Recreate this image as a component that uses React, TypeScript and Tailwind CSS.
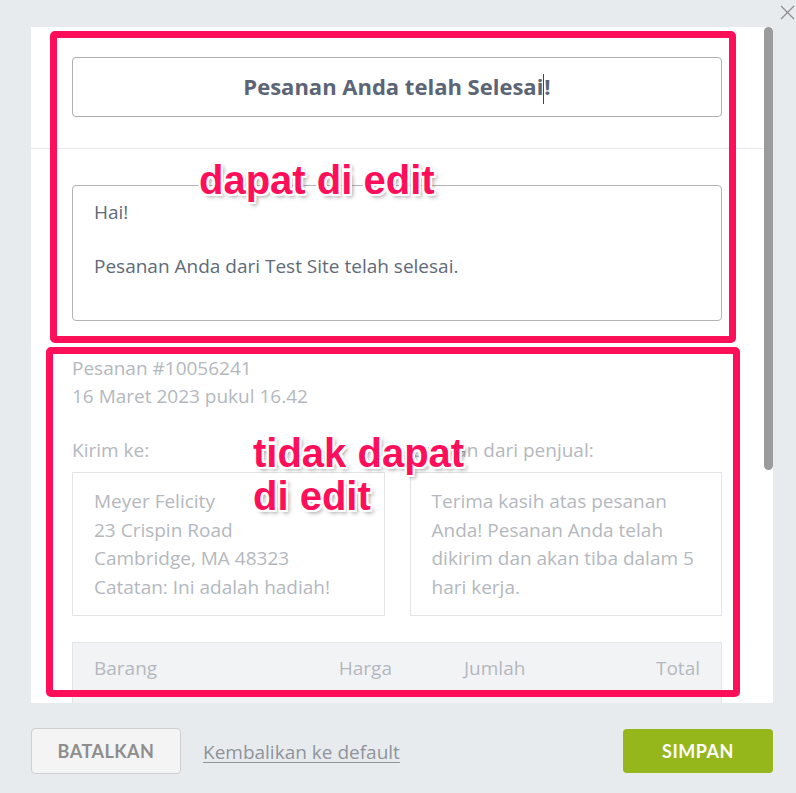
import React from "react";

const outline =
  "[text-shadow:2px_0_0_#fff,-2px_0_0_#fff,0_2px_0_#fff,0_-2px_0_#fff,2px_2px_0_#fff,-2px_-2px_0_#fff,2px_-2px_0_#fff,-2px_2px_0_#fff,3px_3px_4px_rgba(0,0,0,0.4)]";

export default function App() {
  return (
    <div className="relative w-[796px] h-[793px] bg-[#e8ebee] overflow-hidden font-['Open_Sans',sans-serif]">
      {/* close */}
      <svg
        className="absolute left-[779px] top-[4px]"
        width="17"
        height="17"
        viewBox="0 0 17 17"
      >
        <path d="M2 2 L15 15 M15 2 L2 15" stroke="#8c8f93" strokeWidth="1.3" fill="none" />
      </svg>

      <div className="flex flex-col pt-[27px] pl-[31px] pr-[23px]">
        {/* scrolling area */}
        <div className="h-[676px] bg-white flex overflow-hidden">
          <div className="w-[732px] shrink-0">
            <div className="px-[41px] pt-[30px] pb-[31px] border-b border-[#e6e8eb]">
              <div className="h-[60px] border border-[#b0b0b0] rounded-[4px] flex items-center justify-center text-[22px] font-bold text-[#5b6576]">
                <span>
                  Pesanan Anda telah Selesai
                  <span className="inline-block w-px h-[30px] bg-[#444] align-middle -mt-[2px]"></span>
                  !
                </span>
              </div>
            </div>
            <div className="px-[41px] pt-[36px]">
              <div className="h-[136px] border border-[#b3b3b3] rounded-[4px] pl-[21px] pt-[13px] text-[19px] leading-[27px] text-[#606a78]">
                <div>Hai!</div>
                <div>&nbsp;</div>
                <div>Pesanan Anda dari Test Site telah selesai.</div>
              </div>
              <div className="mt-[33px] text-[19px] leading-[28px] text-[#b4b8be]">
                <div>Pesanan #10056241</div>
                <div>16 Maret 2023 pukul 16.42</div>
              </div>
              <div className="mt-[26px] grid grid-cols-2 gap-x-[25px] text-[19px] text-[#b4b8be]">
                <div>
                  <div className="leading-[28px]">Kirim ke:</div>
                  <div className="mt-[8px] h-[144px] border border-[#e3e4e6] pl-[21px] pt-[14px] leading-[28.5px]">
                    <div>Meyer Felicity</div>
                    <div>23 Crispin Road</div>
                    <div>Cambridge, MA 48323</div>
                    <div>Catatan: Ini adalah hadiah!</div>
                  </div>
                </div>
                <div>
                  <div className="leading-[28px]">Catatan dari penjual:</div>
                  <div className="mt-[8px] h-[144px] border border-[#e3e4e6] pl-[21px] pr-[14px] pt-[14px] leading-[28.5px]">
                    Terima kasih atas pesanan Anda! Pesanan Anda telah dikirim dan akan tiba dalam 5 hari kerja.
                  </div>
                </div>
              </div>
              <div className="mt-[26px] h-[100px] border border-[#e3e4e6] bg-[#f2f3f5]">
                <div className="flex items-center h-[50px] px-[21px] text-[19px] text-[#b4b8be]">
                  <div className="w-[200px]">Barang</div>
                  <div className="w-[98px] text-right">Harga</div>
                  <div className="ml-[72px] w-[100px]">Jumlah</div>
                  <div className="flex-1 text-right">Total</div>
                </div>
              </div>
            </div>
          </div>
          <div className="w-[10px] shrink-0 pl-px">
            <div className="w-[9px] h-[443px] bg-[#9b9b9b] rounded-[5px]"></div>
          </div>
        </div>

        {/* footer */}
        <div className="h-[90px] flex items-start pt-[25px]">
          <button className="w-[150px] h-[46px] border border-[#cfcfcf] bg-[#f4f4f4] rounded-[4px] font-['Lato',sans-serif] font-bold text-[18px] tracking-[0.5px] text-[#8e8e8e]">
            BATALKAN
          </button>
          <span className="ml-[22px] mt-[10px] text-[19px] text-[#8f949b] underline underline-offset-[3px]">
            Kembalikan ke default
          </span>
          <button className="ml-auto mt-px w-[150px] h-[44px] bg-[#95b71b] rounded-[4px] font-['Lato',sans-serif] font-bold text-[18px] tracking-[0.5px] text-white">
            SIMPAN
          </button>
        </div>
      </div>

      {/* annotation boxes */}
      <div className="absolute left-[50px] top-[31px] w-[686px] h-[312px] border-[7px] border-[#ff0f5a] rounded-[5px]"></div>
      <div className="absolute left-[46px] top-[347px] w-[694px] h-[350px] border-[7px] border-[#ff0f5a] rounded-[5px]"></div>

      {/* annotation labels */}
      <div
        className={`absolute left-[199px] top-[158px] font-['Liberation_Sans',Arial,sans-serif] font-bold text-[40px] leading-[44px] text-[#ff0f5a] ${outline}`}
      >
        dapat di edit
      </div>
      <div
        className={`absolute left-[253px] top-[432px] font-['Liberation_Sans',Arial,sans-serif] font-bold text-[40px] leading-[43px] text-[#ff0f5a] ${outline}`}
      >
        <div>tidak dapat</div>
        <div>di edit</div>
      </div>
    </div>
  );
}
